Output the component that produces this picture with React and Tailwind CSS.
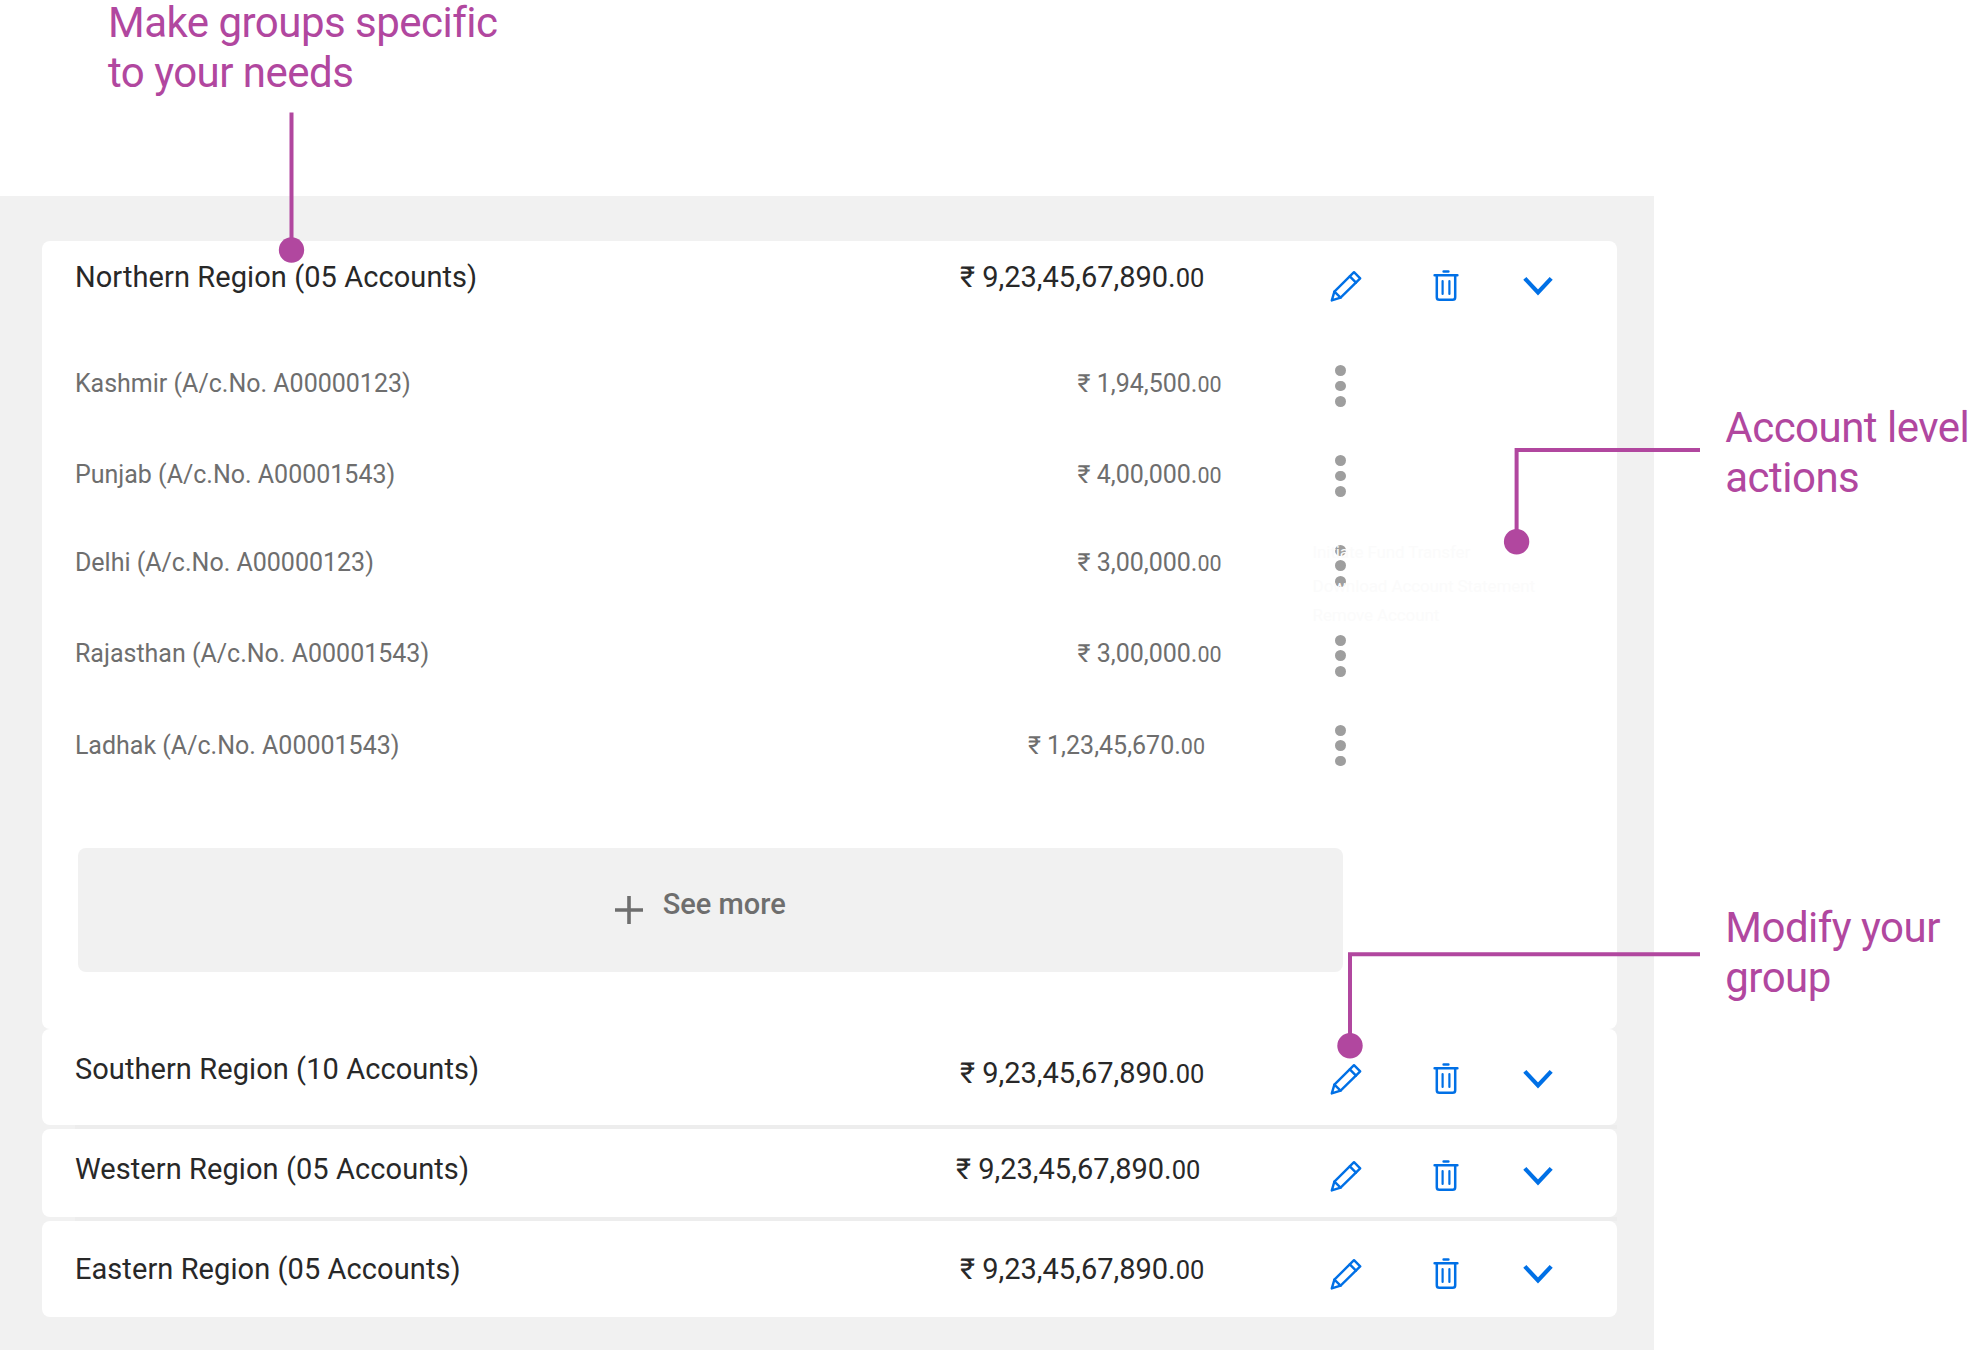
const accounts = [
  { name: "Kashmir (A/c.No. A00000123)", amount: "1,94,500.", row: "h-[91.5px]", end: "pr-0", dots: "mt-[-3.6px]" },
  { name: "Punjab (A/c.No. A00001543)", amount: "4,00,000.", row: "h-[88px]", end: "pr-0", dots: "mt-[-5px]" },
  { name: "Delhi (A/c.No. A00000123)", amount: "3,00,000.", row: "h-[91px]", end: "pr-0", dots: "mt-[-3.2px]" },
  { name: "Rajasthan (A/c.No. A00001543)", amount: "3,00,000.", row: "h-[92px]", end: "pr-0", dots: "mt-[-4.3px]" },
  { name: "Ladhak (A/c.No. A00001543)", amount: "1,23,45,670.", row: "h-[30px]", end: "pr-[16.6px]", dots: "mt-[-6.4px]" },
];

function Pencil() {
  return (
    <svg className="block h-[34px] w-[34px]" viewBox="0 0 34 34" fill="none" stroke="#0070e6" strokeWidth="2.4" strokeLinejoin="round" strokeLinecap="round">
      <path d="M25 3.2 31.2 9.4 11.6 28.6 2.8 31.4 5.4 22.6Z" />
      <path d="M20.8 7.4 27 13.6M5.4 22.6 11.6 28.6" />
    </svg>
  );
}

function Trash() {
  return (
    <svg className="block h-[34px] w-[28px]" viewBox="0 0 28 34" fill="none" stroke="#0070e6" strokeWidth="2.5" strokeLinecap="round">
      <path d="M11.6 2.4h4.8M2.6 6.2h22.8" />
      <path d="M4.8 6.6v21.6q0 2.6 2.6 2.6h13.2q2.6 0 2.6-2.6V6.6" />
      <path d="M10.6 12v13M17.4 12v13" strokeWidth="2.2" />
    </svg>
  );
}

function Chevron() {
  return (
    <svg className="block h-[34px] w-[32px]" viewBox="0 0 32 34" fill="none" stroke="#0070e6" strokeWidth="4.2">
      <path d="M2.8 9.4 16 23.4 29.2 9.4" />
    </svg>
  );
}

function Dots({ className }) {
  return (
    <span className={"flex flex-col gap-[4.6px] " + className}>
      <i className="size-[10.8px] rounded-full bg-[#9e9e9e]" />
      <i className="size-[10.8px] rounded-full bg-[#9e9e9e]" />
      <i className="size-[10.8px] rounded-full bg-[#9e9e9e]" />
    </span>
  );
}

function GroupHeader({ name, amount, nameTop, amountTop, iconTop, end }) {
  return (
    <div className="flex text-[29px] leading-[34px] text-[#282828]">
      <h2 className={"w-[600px] pl-[33.3px] font-normal tracking-[0.08px] " + nameTop}>{name}</h2>
      <p className={"w-[582px] text-right " + amountTop + " " + end}>
        ₹ {amount}<span className="text-[25.5px]">00</span>
      </p>
      <div className={"ml-[105px] flex " + iconTop}>
        <button className="h-[34px] w-[103.4px]"><Pencil /></button>
        <button className="h-[34px] w-[90px]"><Trash /></button>
        <button className="h-[34px]"><Chevron /></button>
      </div>
    </div>
  );
}

function Callout({ children, className = "" }) {
  return <p className={"h-[100px] text-[42px] leading-[50px] tracking-[-0.52px] text-[#b1479f] " + className}>{children}</p>;
}

export default function App() {
  return (
    <main className="relative flex h-[1350px] w-[1980px] flex-col bg-white font-['Roboto',sans-serif]">
      <header className="h-[195.7px] shrink-0 pl-[108px]">
        <Callout className="mt-[-2px]">Make groups specific<br />to your needs</Callout>
      </header>

      <div className="flex grow">
        <section className="w-[1654px] bg-[#f1f1f1] pt-[45.6px] pl-[41.6px]">
          <div className="w-[1575.1px]">
            <article className="h-[787.7px] rounded-[8px] bg-white">
              <GroupHeader name="Northern Region (05 Accounts)" amount="9,23,45,67,890." nameTop="pt-[19px]" amountTop="pt-[19px]" iconTop="pt-[27.5px]" end="pr-[19.2px]" />
              <div className="relative mt-[66px] text-[25px] leading-[30px] text-[#6e6e6e]">
                {accounts.map((a) => (
                  <div key={a.name} className={"flex items-start " + a.row}>
                    <p className="w-[600px] pl-[33.3px]">{a.name}</p>
                    <p className={"w-[580px] text-right " + a.end}>
                      ₹ {a.amount}<span className="text-[21.5px]">00</span>
                    </p>
                    <Dots className={"ml-[113.2px] " + a.dots} />
                  </div>
                ))}
                <ul className="absolute top-[173px] left-[1271px] text-[17px] leading-[20px] tracking-[-0.12px] whitespace-nowrap text-[#fbfbfb]">
                  <li className="h-[34px]">Initiate Fund Transfer</li>
                  <li className="h-[29.5px]">Download Account Statement</li>
                  <li>Remove Account</li>
                </ul>
              </div>
              <button className="mt-[87px] ml-[36px] flex h-[123.5px] w-[1265.6px] rounded-[8px] bg-[#f1f1f1] pt-[39px] pl-[537.5px] text-[29px] leading-[34px] font-medium text-[#6e6e6e]">
                <svg className="mt-[9px] mr-[19.6px] size-[28px]" viewBox="0 0 28 28" stroke="#6e6e6e" strokeWidth="3.6">
                  <path d="M14 0v28M0 14h28" />
                </svg>
                See more
              </button>
            </article>

            <article className="h-[96px] rounded-[8px] bg-white">
              <GroupHeader name="Southern Region (10 Accounts)" amount="9,23,45,67,890." nameTop="pt-[23px]" amountTop="pt-[27px]" iconTop="pt-[33.3px]" end="pr-[19.2px]" />
            </article>
            <div className="ml-[33px] h-[4px] bg-[#ededed]" />
            <article className="h-[88px] rounded-[8px] bg-white">
              <GroupHeader name="Western Region (05 Accounts)" amount="9,23,45,67,890." nameTop="pt-[23px]" amountTop="pt-[23px]" iconTop="pt-[30.5px]" end="pr-[23.2px]" />
            </article>
            <div className="ml-[33px] h-[4px] bg-[#ededed]" />
            <article className="h-[96px] rounded-[8px] bg-white">
              <GroupHeader name="Eastern Region (05 Accounts)" amount="9,23,45,67,890." nameTop="pt-[31px]" amountTop="pt-[31px]" iconTop="pt-[36.3px]" end="pr-[19.2px]" />
            </article>
          </div>
        </section>
        <aside className="flex grow flex-col gap-[400px] pt-[207px] pl-[71.3px] whitespace-nowrap">
          <Callout>Account level<br />actions</Callout>
          <Callout>Modify your<br />group</Callout>
        </aside>
      </div>

      <svg className="pointer-events-none absolute inset-0" width="1980" height="1350" fill="none" stroke="#b1479f" strokeWidth="4">
        <path d="M291.5 112.5V250M1700 450H1516.6V541M1700 954.2H1350V1045" />
        <g fill="#b1479f" stroke="none">
          <circle cx="291.5" cy="250" r="12.7" />
          <circle cx="1516.6" cy="541.7" r="12.7" />
          <circle cx="1350" cy="1045.7" r="12.7" />
        </g>
      </svg>
    </main>
  );
}
